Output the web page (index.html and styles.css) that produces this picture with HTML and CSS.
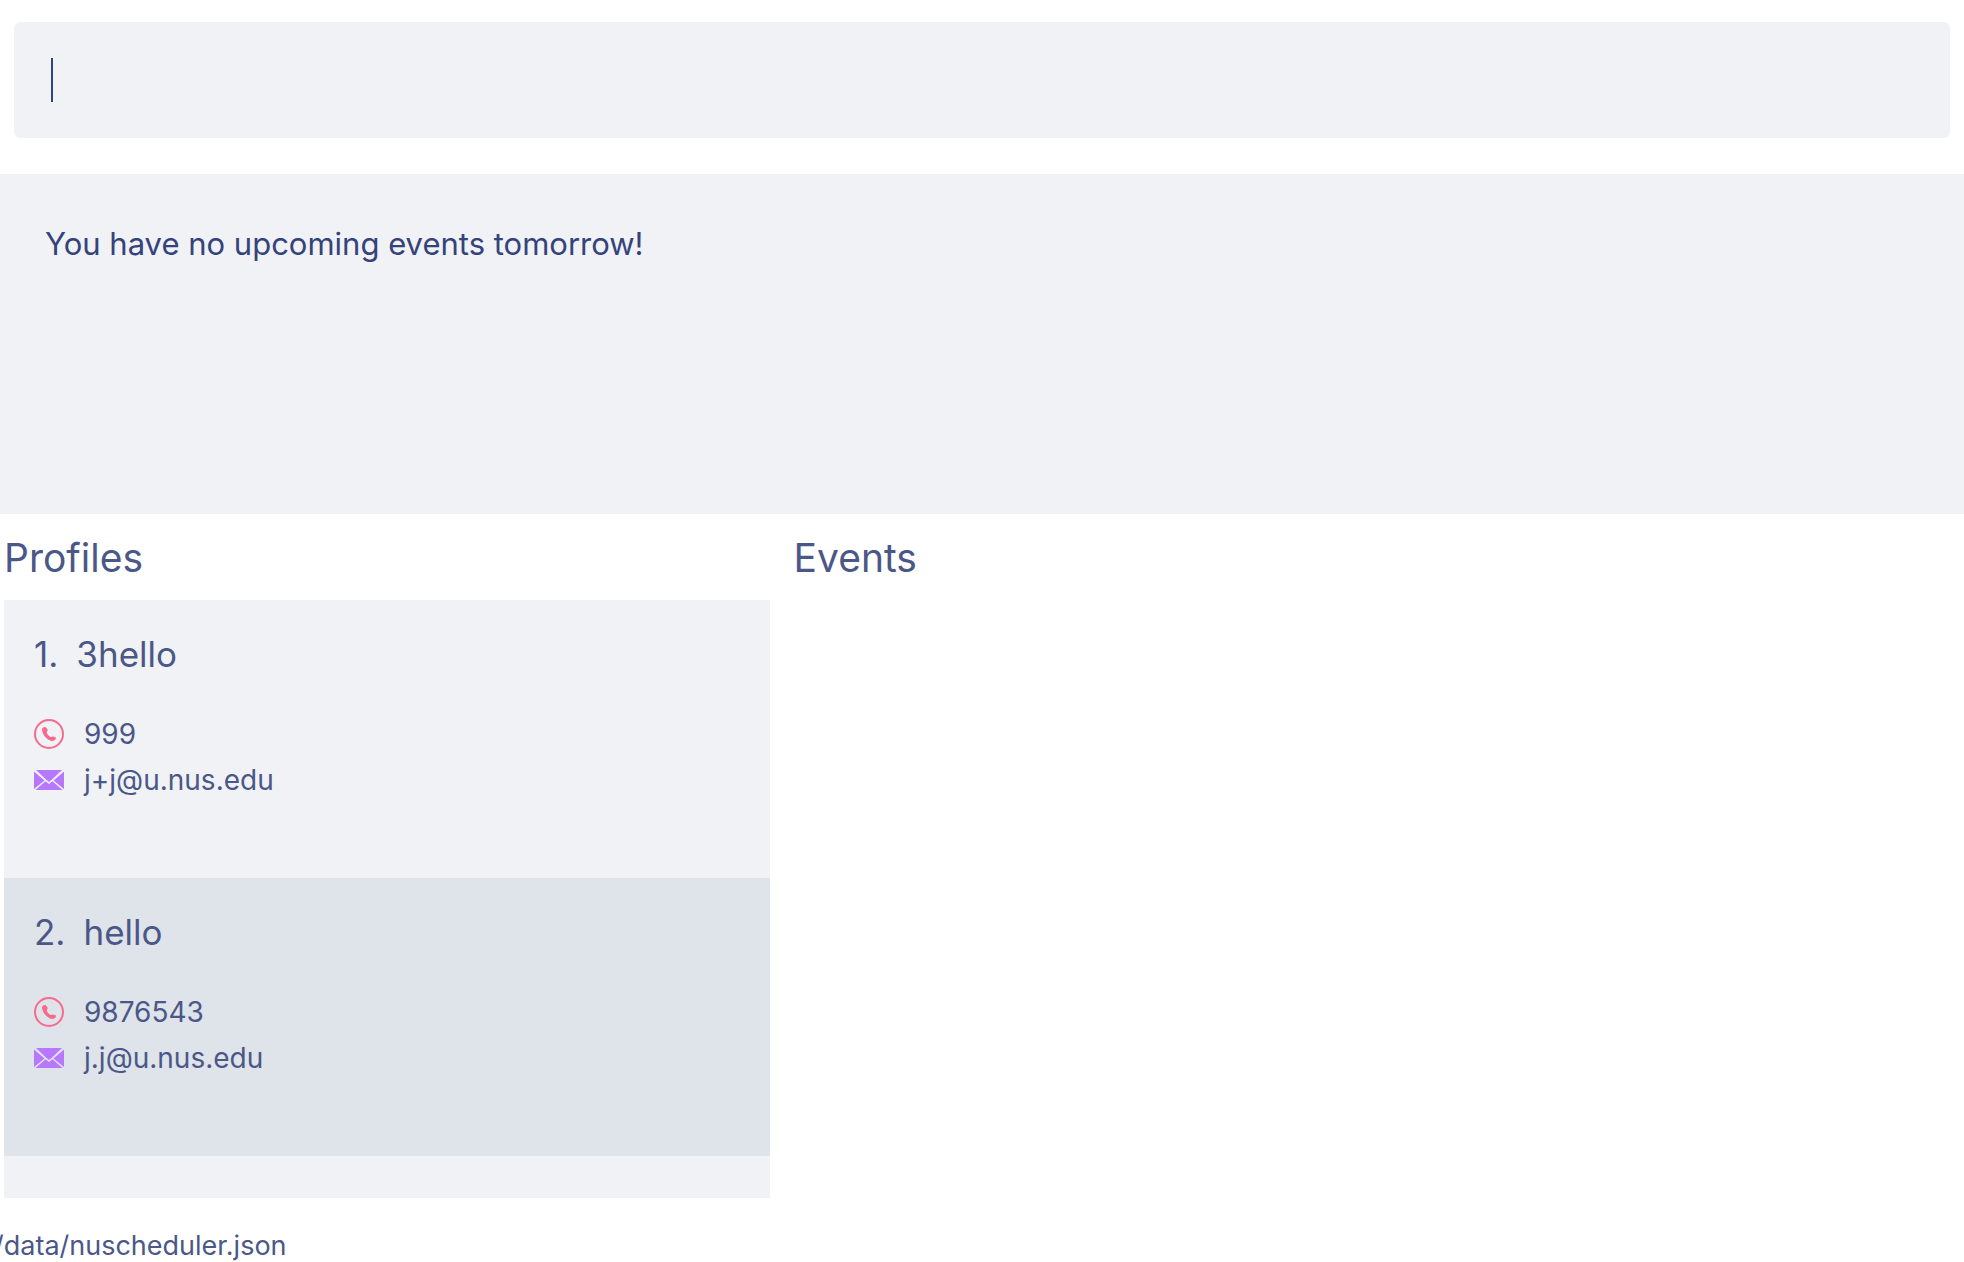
FILE: index.html
```html
<!DOCTYPE html>
<html lang="en">
<head>
<meta charset="utf-8">
<title>NUScheduler</title>
<link rel="stylesheet" href="styles.css">
</head>
<body>
<svg class="sprite" aria-hidden="true">
  <symbol id="phone" viewBox="0 0 30 30">
    <circle cx="15" cy="15" r="14" fill="none" stroke="#f86a8d" stroke-width="2"/>
    <path fill="#f86a8d" d="M8 10C8.300 8.500 10 7.800 11.500 8L13.600 10.500C14 12 12.600 12.800 12.700 13.700C13.400 15.500 15 17.200 16.500 18C17.600 18.200 18.100 17.400 19 17.400L22 18.600C22.200 20.700 20 22 18 22C13.500 21.300 8 15.800 8 10Z"/>
  </symbol>
  <symbol id="mail" viewBox="0 0 30 20">
    <path fill="#b877ff" d="M2 0H28L18 9.500L15 12L12 9.500ZM0 1.500L10.500 10.500L0 19ZM30 1.500V19L19.500 10.500ZM1.500 20L11.500 11.300L15 14L18.500 11.300L28.500 20Z"/>
  </symbol>
</svg>
<main class="app">
  <form class="command">
    <input class="command-input" type="text" aria-label="Command">
    <span class="caret"></span>
  </form>
  <section class="result">You have no upcoming events tomorrow!</section>
  <div class="panes">
    <section class="pane profiles">
      <h2 class="pane-title">Profiles</h2>
      <ul class="list">
        <li class="card">
          <h3 class="card-title"><span>1.</span><span>3hello</span></h3>
          <p class="detail"><svg class="icon phone"><use href="#phone"/></svg>999</p>
          <p class="detail"><svg class="icon mail"><use href="#mail"/></svg>j+j@u.nus.edu</p>
        </li>
        <li class="card">
          <h3 class="card-title"><span>2.</span><span>hello</span></h3>
          <p class="detail"><svg class="icon phone"><use href="#phone"/></svg>9876543</p>
          <p class="detail"><svg class="icon mail"><use href="#mail"/></svg>j.j@u.nus.edu</p>
        </li>
      </ul>
    </section>
    <section class="pane events">
      <h2 class="pane-title">Events</h2>
    </section>
  </div>
  <footer class="status"><span class="path">/data/nuscheduler.json</span></footer>
</main>
</body>
</html>
```
FILE: styles.css
```css
* { box-sizing: border-box; margin: 0; padding: 0; }
body {
  background: #fff;
  color: #4b5887;
  font-family: Inter, "Liberation Sans", sans-serif;
  overflow: hidden;
}
.sprite { position: absolute; width: 0; height: 0; }
.app { display: flex; flex-direction: column; height: 100vh; }
.command { position: relative; padding: 22px 14px 36px; }
.command-input {
  display: block;
  width: 100%;
  height: 116px;
  padding: 36px;
  border: 0;
  border-radius: 6px;
  outline: 0;
  background: #f0f2f6;
  color: #35437b;
  font: inherit;
  font-size: 31px;
}
.caret { position: absolute; left: 51px; top: 58px; width: 2px; height: 44px; background: #35437b; }
.result {
  min-height: 340px;
  padding: 48px 45px;
  background: #f0f2f6;
  color: #35437b;
  font-size: 31px;
  line-height: 44px;
}
.panes { display: grid; grid-template-columns: 2fr 3fr; flex: 1; min-height: 0; }
.pane { display: flex; flex-direction: column; min-height: 0; }
.profiles { padding: 0 16px 0 4px; }
.events { padding-left: 8px; }
.pane-title { padding: 20px 0 18px; font-size: 39px; line-height: 48px; font-weight: 400; }
.list { flex: 1; background: #f0f2f6; list-style: none; overflow: hidden; }
.card { height: 278px; padding: 32px 30px; }
.card:nth-child(even) { background: #dfe3ea; }
.card-title { display: flex; gap: 18px; margin-bottom: 35px; font-size: 35px; line-height: 44px; font-weight: 400; }
.detail { display: flex; align-items: center; gap: 20px; font-size: 28px; line-height: 46px; }
.icon { width: 30px; }
.phone { height: 30px; }
.mail { height: 20px; }
.status { height: 64px; overflow: hidden; }
.path { display: block; margin: 24px 0 0 -6px; font-size: 27px; line-height: 48px; }
```
